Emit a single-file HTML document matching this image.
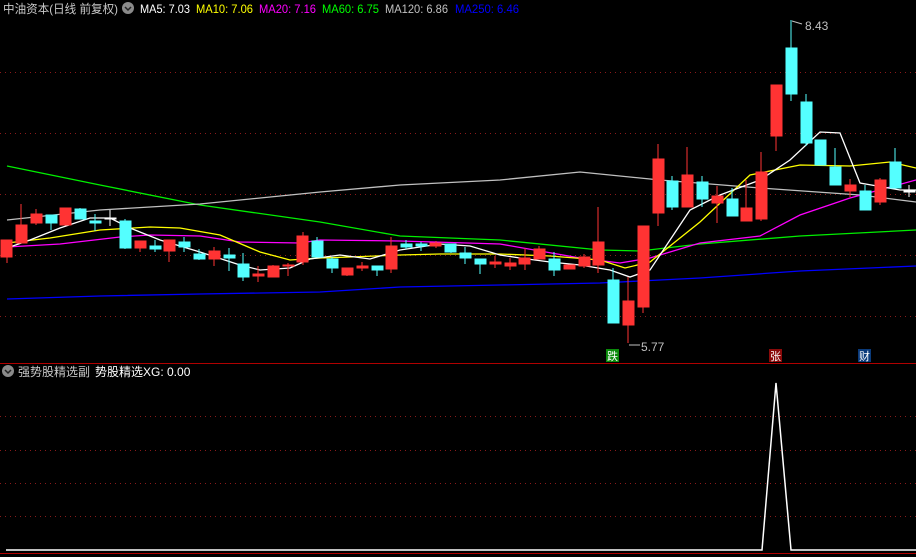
<!DOCTYPE html>
<html><head><meta charset="utf-8"><style>
html,body{margin:0;padding:0;background:#000;}
body{width:916px;height:557px;overflow:hidden;position:relative;font-family:"Liberation Sans","Noto Sans CJK SC",sans-serif;}
svg{position:absolute;left:0;top:0;}
text{font-family:"Liberation Sans","Noto Sans CJK SC",sans-serif;}
</style></head><body>
<svg width="916" height="557" viewBox="0 0 916 557" xmlns="http://www.w3.org/2000/svg">
<rect width="916" height="557" fill="#000"/>
<g stroke="#8a1a1a" stroke-width="1" stroke-dasharray="1,4">
<line x1="0" y1="72.5" x2="916" y2="72.5"/>
<line x1="0" y1="133.5" x2="916" y2="133.5"/>
<line x1="0" y1="194.5" x2="916" y2="194.5"/>
<line x1="0" y1="255.5" x2="916" y2="255.5"/>
<line x1="0" y1="316.5" x2="916" y2="316.5"/>
<line x1="0" y1="416.5" x2="916" y2="416.5"/>
<line x1="0" y1="450.5" x2="916" y2="450.5"/>
<line x1="0" y1="483.5" x2="916" y2="483.5"/>
<line x1="0" y1="516.5" x2="916" y2="516.5"/>
</g>
<line x1="0" y1="363.5" x2="916" y2="363.5" stroke="#b00000"/>
<line x1="0" y1="553.5" x2="916" y2="553.5" stroke="#b00000"/>
<g fill="none" stroke-width="1.3">
<polyline stroke="#00ee00" points="7,166 100,185 200,205 320,222 400,236 500,240 600,250 640,251 700,244 800,236 916,230"/>
<polyline stroke="#c0c0c0" points="7,220 100,210 200,204 320,192 400,185 500,180 580,172 660,180 760,188 860,195 916,202"/>
<polyline stroke="#0000ff" points="7,299 100,296 200,294 320,292 400,287 500,285 600,283 700,278 800,271 916,266"/>
<polyline stroke="#ff00ff" points="7,247 60,244 120,237 150,235 200,236 240,242 300,243 320,240 400,241 500,244 580,258 620,263 650,258 700,243 760,236 800,215 850,198 916,180"/>
<polyline stroke="#ffff00" points="7,243 50,238 100,230 150,227 180,228 220,235 260,252 290,260 320,258 350,257 400,255 440,254 500,254 550,256 600,260 625,268 650,262 700,222 750,175 800,165 850,166 890,162 916,168"/>
<polyline stroke="#ffffff" points="7,248 30,240 60,228 90,218 110,218 130,228 160,240 200,252 240,265 260,270 290,268 310,259 340,255 370,259 400,250 440,244 470,246 500,255 520,258 550,262 580,265 610,270 630,277 650,270 670,240 690,210 720,195 760,180 790,160 820,132 840,133 860,183 900,190 916,190"/>
</g>
<g>
<g stroke="#ff3333" fill="#ff3333">
<line x1="7" y1="240" x2="7" y2="263"/><rect x="1" y="240" width="11" height="17"/>
<line x1="21" y1="204" x2="21" y2="243"/><rect x="16" y="225" width="11" height="18"/>
<line x1="36" y1="209" x2="36" y2="225"/><rect x="31" y="214" width="11" height="9"/>
<line x1="66" y1="208" x2="66" y2="225"/><rect x="60" y="208" width="11" height="17"/>
<line x1="140" y1="241" x2="140" y2="252"/><rect x="135" y="241" width="11" height="7"/>
<line x1="169" y1="240" x2="169" y2="262"/><rect x="164" y="240" width="11" height="11"/>
<line x1="214" y1="247" x2="214" y2="266"/><rect x="209" y="251" width="11" height="8"/>
<line x1="258" y1="266" x2="258" y2="282"/><rect x="253" y="274" width="11" height="2"/>
<line x1="273" y1="265" x2="273" y2="277"/><rect x="268" y="266" width="11" height="11"/>
<line x1="288" y1="263" x2="288" y2="276"/><rect x="283" y="265" width="11" height="1"/>
<line x1="303" y1="232" x2="303" y2="265"/><rect x="297" y="236" width="11" height="26"/>
<line x1="347" y1="268" x2="347" y2="276"/><rect x="342" y="268" width="11" height="7"/>
<line x1="362" y1="262" x2="362" y2="271"/><rect x="357" y="266" width="11" height="2"/>
<line x1="391" y1="237" x2="391" y2="273"/><rect x="386" y="246" width="11" height="23"/>
<line x1="436" y1="241" x2="436" y2="248"/><rect x="430" y="243" width="11" height="3"/>
<line x1="495" y1="256" x2="495" y2="268"/><rect x="490" y="262" width="11" height="2"/>
<line x1="510" y1="258" x2="510" y2="270"/><rect x="505" y="263" width="11" height="3"/>
<line x1="525" y1="248" x2="525" y2="270"/><rect x="519" y="258" width="11" height="6"/>
<line x1="539" y1="246" x2="539" y2="259"/><rect x="534" y="249" width="11" height="10"/>
<line x1="569" y1="265" x2="569" y2="269"/><rect x="564" y="265" width="11" height="4"/>
<line x1="584" y1="254" x2="584" y2="268"/><rect x="579" y="257" width="11" height="9"/>
<line x1="598" y1="207" x2="598" y2="273"/><rect x="593" y="242" width="11" height="23"/>
<line x1="628" y1="277" x2="628" y2="343"/><rect x="623" y="301" width="11" height="24"/>
<line x1="643" y1="226" x2="643" y2="313"/><rect x="638" y="226" width="11" height="81"/>
<line x1="658" y1="144" x2="658" y2="226"/><rect x="653" y="159" width="11" height="54"/>
<line x1="687" y1="147" x2="687" y2="207"/><rect x="682" y="175" width="11" height="32"/>
<line x1="717" y1="186" x2="717" y2="223"/><rect x="712" y="196" width="11" height="7"/>
<line x1="746" y1="180" x2="746" y2="221"/><rect x="741" y="208" width="11" height="13"/>
<line x1="761" y1="152" x2="761" y2="221"/><rect x="756" y="172" width="11" height="47"/>
<line x1="776" y1="85" x2="776" y2="151"/><rect x="771" y="85" width="11" height="51"/>
<line x1="850" y1="179" x2="850" y2="197"/><rect x="845" y="185" width="11" height="6"/>
<line x1="880" y1="178" x2="880" y2="205"/><rect x="875" y="180" width="11" height="22"/>
</g>
<g stroke="#54ffff" fill="#54ffff">
<line x1="51" y1="215" x2="51" y2="230"/><rect x="46" y="215" width="11" height="8"/>
<line x1="80" y1="208" x2="80" y2="219"/><rect x="75" y="209" width="11" height="10"/>
<line x1="95" y1="214" x2="95" y2="231"/><rect x="90" y="221" width="11" height="2"/>
<line x1="125" y1="219" x2="125" y2="249"/><rect x="120" y="221" width="11" height="27"/>
<line x1="155" y1="240" x2="155" y2="252"/><rect x="150" y="246" width="11" height="3"/>
<line x1="184" y1="237" x2="184" y2="252"/><rect x="179" y="242" width="11" height="5"/>
<line x1="199" y1="249" x2="199" y2="260"/><rect x="194" y="254" width="11" height="5"/>
<line x1="229" y1="248" x2="229" y2="271"/><rect x="224" y="255" width="11" height="3"/>
<line x1="243" y1="253" x2="243" y2="281"/><rect x="238" y="264" width="11" height="13"/>
<line x1="317" y1="237" x2="317" y2="257"/><rect x="312" y="241" width="11" height="16"/>
<line x1="332" y1="257" x2="332" y2="273"/><rect x="327" y="259" width="11" height="9"/>
<line x1="377" y1="266" x2="377" y2="276"/><rect x="372" y="266" width="11" height="4"/>
<line x1="406" y1="240" x2="406" y2="249"/><rect x="401" y="244" width="11" height="3"/>
<line x1="421" y1="242" x2="421" y2="251"/><rect x="416" y="244" width="11" height="2"/>
<line x1="451" y1="244" x2="451" y2="253"/><rect x="445" y="244" width="11" height="8"/>
<line x1="465" y1="247" x2="465" y2="264"/><rect x="460" y="253" width="11" height="5"/>
<line x1="480" y1="259" x2="480" y2="274"/><rect x="475" y="259" width="11" height="5"/>
<line x1="554" y1="252" x2="554" y2="276"/><rect x="549" y="259" width="11" height="11"/>
<line x1="613" y1="268" x2="613" y2="323"/><rect x="608" y="280" width="11" height="43"/>
<line x1="672" y1="176" x2="672" y2="210"/><rect x="667" y="181" width="11" height="26"/>
<line x1="702" y1="176" x2="702" y2="207"/><rect x="697" y="182" width="11" height="17"/>
<line x1="732" y1="188" x2="732" y2="216"/><rect x="727" y="199" width="11" height="17"/>
<line x1="791" y1="20" x2="791" y2="101"/><rect x="786" y="48" width="11" height="46"/>
<line x1="806" y1="94" x2="806" y2="146"/><rect x="801" y="102" width="11" height="41"/>
<line x1="820" y1="140" x2="820" y2="165"/><rect x="815" y="140" width="11" height="25"/>
<line x1="835" y1="148" x2="835" y2="185"/><rect x="830" y="167" width="11" height="18"/>
<line x1="865" y1="185" x2="865" y2="210"/><rect x="860" y="191" width="11" height="19"/>
<line x1="895" y1="148" x2="895" y2="188"/><rect x="890" y="162" width="11" height="26"/>
</g>
<g stroke="#ffffff" fill="#ffffff">
<line x1="110" y1="210" x2="110" y2="226"/><rect x="105" y="218" width="11" height="1"/>
<line x1="909" y1="185" x2="909" y2="197"/><rect x="904" y="191" width="11" height="1"/>
</g>
</g>
<g stroke="#c0c0c0" fill="none"><polyline points="802,24 792,21"/><polyline points="640,345 629,345"/></g>
<text x="805" y="30" fill="#c0c0c0" font-size="12">8.43</text>
<text x="641" y="351" fill="#c0c0c0" font-size="12">5.77</text>
<rect x="606" y="349" width="13" height="13" fill="#0a8a0a"/><text x="607" y="360" fill="#fff" font-size="11">跌</text>
<rect x="769" y="349" width="13" height="13" fill="#8a0a0a"/><text x="770" y="360" fill="#fff" font-size="11">张</text>
<rect x="858" y="349" width="13" height="13" fill="#0a3a7a"/><text x="859" y="360" fill="#fff" font-size="11">财</text>
<text x="3" y="13" font-size="12" fill="#c8c8c8" textLength="115" lengthAdjust="spacingAndGlyphs">中油资本(日线 前复权)</text>
<circle cx="128" cy="8" r="6" fill="#8a8a8a"/><polyline points="125,7 128,10 131,7" stroke="#222" fill="none" stroke-width="1.5"/>
<text x="140" y="13" font-size="12" fill="#ffffff" textLength="50" lengthAdjust="spacingAndGlyphs">MA5: 7.03</text>
<text x="196" y="13" font-size="12" fill="#ffff00" textLength="57" lengthAdjust="spacingAndGlyphs">MA10: 7.06</text>
<text x="259" y="13" font-size="12" fill="#ff00ff" textLength="57" lengthAdjust="spacingAndGlyphs">MA20: 7.16</text>
<text x="322" y="13" font-size="12" fill="#00ff00" textLength="57" lengthAdjust="spacingAndGlyphs">MA60: 6.75</text>
<text x="385" y="13" font-size="12" fill="#c0c0c0" textLength="63" lengthAdjust="spacingAndGlyphs">MA120: 6.86</text>
<text x="455" y="13" font-size="12" fill="#0000ff" textLength="64" lengthAdjust="spacingAndGlyphs">MA250: 6.46</text>
<circle cx="8" cy="371" r="6" fill="#8a8a8a"/><polyline points="5,370 8,373 11,370" stroke="#222" fill="none" stroke-width="1.5"/>
<text x="18" y="376" font-size="12" fill="#c8c8c8">强势股精选副</text>
<text x="95" y="376" font-size="12" fill="#ffffff">势股精选XG: 0.00</text>
<polyline points="6,550 762,550 776,383 791,550 916,550" fill="none" stroke="#ffffff" stroke-width="1.5"/>
</svg>
</body></html>
